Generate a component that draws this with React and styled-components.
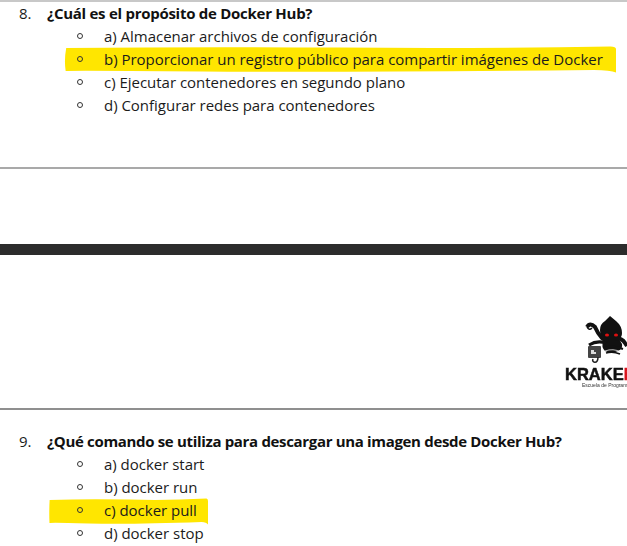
import React from "react"
import styled, { createGlobalStyle } from "styled-components"

const GlobalStyle = createGlobalStyle`
  html, body {
    margin: 0;
    padding: 0;
    background: #fff;
  }
  body {
    font-family: "Open Sans", "Noto Sans", sans-serif;
    color: #1b1b1b;
  }
`

const Page = styled.div`
  width: 627px;
  height: 546px;
  overflow: hidden;
  background: #fff;
  display: flex;
  flex-direction: column;
`

const Rule = styled.div`
  flex: none;
  height: ${(p) => p.$height || 2}px;
  background: ${(p) => p.$color || "#a9a9a9"};
`

const Question = styled.section`
  flex: none;
  height: ${(p) => p.$height}px;
  padding-top: ${(p) => p.$top}px;
  box-sizing: border-box;
`

const Heading = styled.div`
  display: flex;
  height: 23px;
  align-items: center;
  font-size: 15px;
  line-height: 23px;
  white-space: nowrap;
`

const Number = styled.span`
  width: 28px;
  margin-left: 19px;
`

const Title = styled.strong`
  font-weight: 700;
  color: #111;
  letter-spacing: ${(p) => p.$spacing};
`

const Options = styled.ul`
  list-style: none;
  margin: -1px 0 0;
  padding: 0;
`

const Option = styled.li`
  position: relative;
  display: flex;
  align-items: center;
  height: 23px;
  padding-left: 77px;
  font-size: 15px;
  letter-spacing: -0.02px;
  white-space: nowrap;
`

const Bullet = styled.span`
  position: relative;
  z-index: 1;
  flex: none;
  width: 4px;
  height: 4px;
  margin-right: 21px;
  border: 1.3px solid #333;
  border-radius: 50%;
`

const OptionText = styled.span`
  position: relative;
  z-index: 1;
`

const Marker = styled.svg`
  position: absolute;
  left: ${(p) => p.$left}px;
  top: ${(p) => p.$top}px;
  width: ${(p) => p.$width}px;
  height: 27px;
`

const Spacer = styled.div`
  flex: none;
  height: ${(p) => p.$height}px;
`

const LogoBand = styled.div`
  flex: none;
  height: 153px;
  display: flex;
  justify-content: flex-end;
  overflow: hidden;
  padding-top: 60px;
  box-sizing: border-box;
`

const Logo = styled.div`
  flex: none;
  width: 62px;
  display: flex;
  flex-direction: column;
  overflow: hidden;
  filter: blur(0.35px);
`

const Mark = styled.svg`
  flex: none;
  display: block;
`

const Brand = styled.div`
  margin-top: 2px;
  font-family: "Liberation Sans", Arial, sans-serif;
  font-size: 16.5px;
  font-weight: 700;
  line-height: 15px;
  color: #111;
  white-space: nowrap;
  -webkit-text-stroke: 0.5px #111;

  span {
    color: #d8141c;
    -webkit-text-stroke: 0.5px #d8141c;
  }
`

const Tagline = styled.div`
  margin-left: 17px;
  font-family: "Liberation Sans", Arial, sans-serif;
  font-size: 5px;
  line-height: 7px;
  color: #333;
  white-space: nowrap;
`

const questionEight = [
  { text: "a) Almacenar archivos de configuración" },
  { text: "b) Proporcionar un registro público para compartir imágenes de Docker", left: 64, width: 552, top: -1 },
  { text: "c) Ejecutar contenedores en segundo plano" },
  { text: "d) Configurar redes para contenedores" },
]

const questionNine = [
  { text: "a) docker start" },
  { text: "b) docker run" },
  { text: "c) docker pull", left: 49, width: 159, top: 0 },
  { text: "d) docker stop" },
]

function OptionList({ items }) {
  return (
    <Options>
      {items.map((item) => (
        <Option key={item.text}>
          {item.width && (
            <Marker $left={item.left} $top={item.top} $width={item.width} viewBox="0 0 100 27" preserveAspectRatio="none">
              <path
                d="M0.4 2 Q25 0.6 50 1.6 T99 0.6 Q100 1 100 3 L100 26.5 Q99 24 96 24 Q50 26.5 25 25.4 T0.3 25 Q0 14 0.4 2 Z"
                fill="#ffe600"
              />
            </Marker>
          )}
          <Bullet />
          <OptionText>{item.text}</OptionText>
        </Option>
      ))}
    </Options>
  )
}

function KrakenMark() {
  return (
    <Mark width="62" height="50" viewBox="0 0 62 50" fill="none">
      <path
        d="M45 1 L51 6 Q57 11 57 18 Q57 22 54 24 L57 29 Q58 34 53 36 Q46 39 40 36 Q36 32 38 27 L39 24 Q35 21 35 15 Q35 9 40 6 Z"
        fill="#111"
      />
      <path d="M22 12 Q25 7 30 12 Q33 19 37 23 Q40 25 43 26" stroke="#111" strokeWidth="4" />
      <path d="M22 12 Q24 16 27 13" stroke="#111" strokeWidth="1.5" />
      <path d="M50 23 Q57 23 60 28 L62 31" stroke="#111" strokeWidth="4" />
      <path d="M24 30 Q32 25 41 28" stroke="#111" strokeWidth="3" />
      <rect x="23" y="31" width="13" height="12" rx="1" fill="#444" />
      <path d="M26 35 h3 v2 h2 v2 h-5 Z" fill="#ddd" />
      <path d="M33 42 Q33 48 29 47 Q27 46 28 44" stroke="#222" strokeWidth="1.5" />
      <path d="M39 33 Q48 30 58 34" stroke="#111" strokeWidth="2" />
      <path d="M40 36 Q48 33 56 37" stroke="#eee" strokeWidth="0.8" />
      <path d="M41 38 Q48 36 55 39" stroke="#111" strokeWidth="1.5" />
      <ellipse cx="42" cy="20" rx="2" ry="1.5" fill="#e01010" />
      <ellipse cx="51" cy="20" rx="2" ry="1.5" fill="#e01010" />
    </Mark>
  )
}

export default function App() {
  return (
    <Page>
      <GlobalStyle />
      <Rule $height={2} $color="#c8c8c8" />
      <Question $height={165} $top={0}>
        <Heading>
          <Number>8.</Number>
          <Title $spacing="-0.27px">¿Cuál es el propósito de Docker Hub?</Title>
        </Heading>
        <OptionList items={questionEight} />
      </Question>
      <Rule $height={2} />
      <Spacer $height={75} />
      <Rule $height={11} $color="#2c2c2c" />
      <LogoBand>
        <Logo>
          <KrakenMark />
          <Brand>
            KRAKE<span>N</span>
          </Brand>
          <Tagline>Escuela de Programación</Tagline>
        </Logo>
      </LogoBand>
      <Rule $height={2} $color="#8f8f8f" />
      <Question $height={136} $top={20}>
        <Heading>
          <Number>9.</Number>
          <Title $spacing="-0.33px">¿Qué comando se utiliza para descargar una imagen desde Docker Hub?</Title>
        </Heading>
        <OptionList items={questionNine} />
      </Question>
    </Page>
  )
}
